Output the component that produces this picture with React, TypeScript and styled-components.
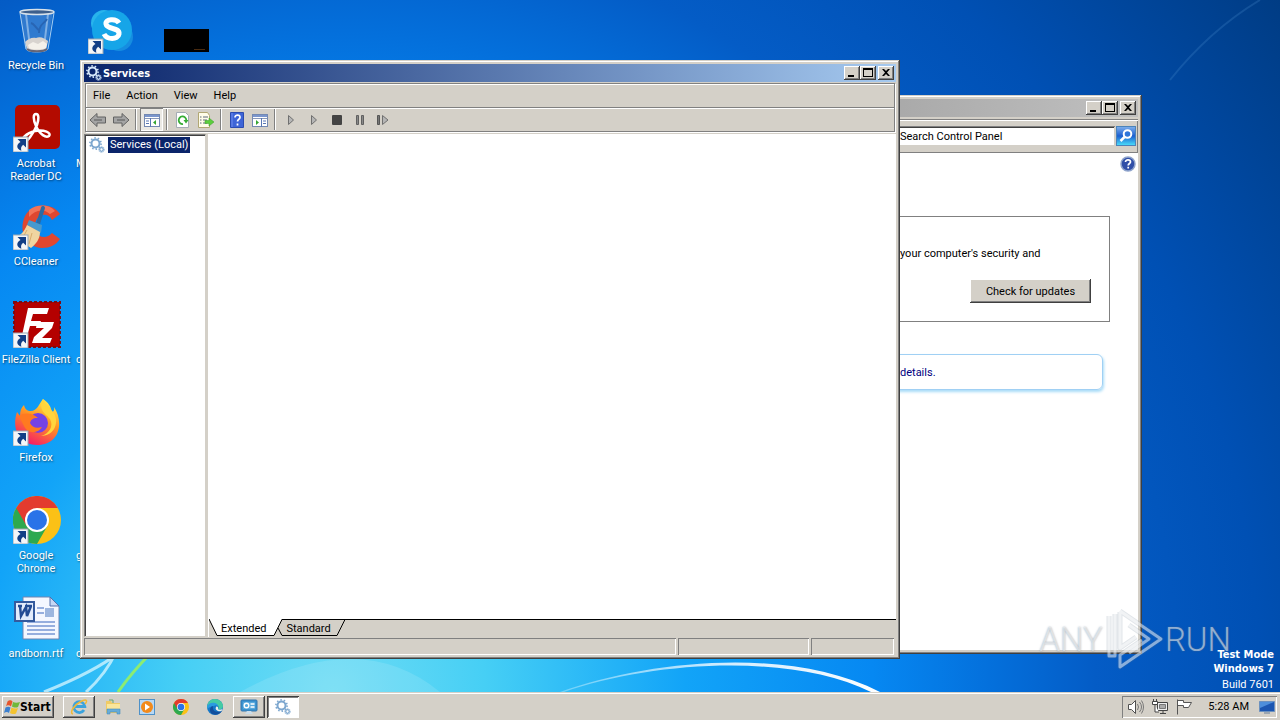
import React from 'react';
import styled, { createGlobalStyle, css } from 'styled-components';

const FACE = '#d4d0c8';
const UI_FONT = 'Roboto, "Liberation Sans", sans-serif';
const BOLD_FONT = '"DejaVu Sans Condensed", "DejaVu Sans", sans-serif';

const GlobalStyle = createGlobalStyle`
  * { box-sizing: border-box; }
  body { margin: 0; font: 11px/13px ${UI_FONT}; color: #000; }
  ul, p { margin: 0; padding: 0; list-style: none; }
  button, input { font: inherit; color: inherit; margin: 0; padding: 0; border: 0; border-radius: 0; background: none; }
  svg { display: block; flex: none; }
`;

const raised = css`
  box-shadow: inset -1px -1px #404040, inset 1px 1px #fff, inset -2px -2px #808080;
`;
const sunken = css`
  box-shadow: inset 1px 1px #808080, inset -1px -1px #fff;
`;

const Screen = styled.div`
  min-height: 100vh;
  display: flex;
  flex-direction: column;
  overflow: hidden;
`;
const Desktop = styled.main`
  position: relative;
  flex: 1;
  display: flex;
  overflow: hidden;
  background: radial-gradient(circle farthest-corner at 26% 100%, #6edcf4 0%, #46cff5 13%, #12a4f8 30%, #0688f2 46%, #0470dc 56%, #045cc6 65%, #0050b4 79%, #003c84 100%);
`;
const Wallpaper = styled.svg`
  position: absolute;
  left: 0;
  bottom: 0;
  width: 100%;
  height: 100%;
`;
const IconColumn = styled.ul`
  position: relative;
  width: 75px;
`;
const DesktopItem = styled.li`
  height: 98px;
  padding: 6px 2px 0 0;
  display: flex;
  flex-direction: column;
  align-items: center;
  gap: 5px;
  text-align: center;
  color: #fff;
  text-shadow: 1px 1px 2px rgba(0, 0, 0, 0.5);
`;
const IconSlot = styled.div`
  width: 48px;
  height: 48px;
`;
const ItemLabel = styled.span<{ $start?: boolean }>`
  max-width: 73px;
  align-self: ${(p) => (p.$start ? 'flex-start' : 'center')};
  padding: ${(p) => (p.$start ? '0 0 0 1px' : '0 1px 0 0')};
`;

const Frame = styled.section`
  position: absolute;
  display: flex;
  flex-direction: column;
  padding: 4px;
  background: ${FACE};
  box-shadow: inset -1px -1px #404040, inset 1px 1px ${FACE}, inset -2px -2px #808080, inset 2px 2px #fff;
`;
const ServicesFrame = styled(Frame)`
  left: 80px;
  right: 380px;
  top: 60px;
  bottom: 33px;
`;
const PanelFrame = styled(Frame)`
  width: 265px;
  right: 138px;
  top: 95px;
  bottom: 38px;
`;
const TitleBar = styled.header<{ $active?: boolean }>`
  height: 18px;
  flex: none;
  display: flex;
  align-items: center;
  gap: 1px;
  padding: 0 2px;
  color: #fff;
  font-family: ${BOLD_FONT};
  font-weight: bold;
  background: ${(p) => (p.$active ? 'linear-gradient(90deg, #0a246a, #a6caf0)' : 'linear-gradient(90deg, #a8a8a8, #c0c0c0)')};
`;
const TitleButtons = styled.div`
  margin-left: auto;
  display: flex;
`;
const CaptionButton = styled.button<{ $gap?: boolean }>`
  width: 16px;
  height: 14px;
  margin-left: ${(p) => (p.$gap ? '2px' : '0')};
  display: grid;
  place-items: center;
  background: ${FACE};
  ${raised}
`;
const Bars = styled.div`
  flex: none;
  margin: 1px 1px 2px;
  border: 1px solid #808080;
  box-shadow: 1px 1px #fff, inset 1px 1px #fff;
`;
const MenuBar = styled.nav`
  height: 24px;
  display: flex;
  align-items: center;
  padding-left: 7px;
  gap: 16px;
  border-bottom: 1px solid #808080;
`;
const MenuButton = styled.button`
  height: 18px;
`;
const ToolBar = styled.div`
  height: 23px;
  display: flex;
  box-shadow: inset 0 1px #fff;
`;
const ToolButton = styled.button<{ $pressed?: boolean }>`
  width: 23px;
  display: grid;
  place-items: center;
  ${(p) => p.$pressed && css`background: #ebe9e4; ${sunken}`}
`;
const Divider = styled.span`
  width: 2px;
  margin: 1px 3px;
  border-left: 1px solid #808080;
  border-right: 1px solid #fff;
`;
const Body = styled.div`
  flex: 1;
  display: flex;
  gap: 3px;
  min-height: 0;
`;
const Tree = styled.div`
  width: 122px;
  padding: 2px 0 0 4px;
  background: #fff;
  border: 1px solid #808080;
  border-right-color: #d4d0c8;
  border-bottom-color: #d4d0c8;
  box-shadow: inset 1px 1px #404040;
`;
const TreeItem = styled.button`
  display: flex;
  align-items: center;
  gap: 3px;
`;
const Selected = styled.span`
  padding: 1px 2px 2px;
  white-space: nowrap;
  color: #fff;
  background: #0a246a;
`;
const Content = styled.div`
  flex: 1;
  display: flex;
  flex-direction: column;
  box-shadow: -1px 0 #fff;
`;
const Sheet = styled.div`
  flex: 1;
  background: #fff;
`;
const TabStrip = styled.div`
  position: relative;
  height: 18px;
  display: flex;
  align-items: center;
  padding-left: 12px;
  gap: 20px;
  border-top: 1px solid #000;
`;
const TabShapes = styled.svg`
  position: absolute;
  left: 0;
  top: -1px;
`;
const Tab = styled.button`
  position: relative;
`;
const StatusBar = styled.footer`
  height: 18px;
  padding: 1px 2px 0 0;
  display: flex;
  gap: 2px;
`;
const StatusCell = styled.div<{ $width?: number }>`
  ${(p) => (p.$width ? `width: ${p.$width}px;` : 'flex: 1;')}
  ${sunken}
`;

const SearchBar = styled.div`
  height: 34px;
  flex: none;
  margin-top: 2px;
  display: flex;
  align-items: center;
  gap: 1px;
  border-top: 1px solid #808080;
  border-bottom: 1px solid #808080;
  box-shadow: inset 0 1px #fff, inset -1px 0 #808080;
`;
const SearchInput = styled.input`
  flex: 1;
  min-width: 0;
  height: 20px;
  padding-left: 19px;
  background: #fff;
  box-shadow: inset 1px 1px #808080, inset -1px -1px #d4d0c8, inset 0 2px #404040;
  &::placeholder { color: #000; opacity: 1; }
`;
const SearchButton = styled.button`
  margin-right: 2px;
`;
const PanelContent = styled.div`
  flex: 1;
  background: #fff;
  display: flex;
  flex-direction: column;
`;
const HelpButton = styled.button`
  align-self: flex-end;
  margin: 3px 2px 0 0;
`;
const UpdateBox = styled.div`
  height: 106px;
  margin: 44px 28px 0 4px;
  padding: 30px 18px 0 14px;
  border: 1px solid #808080;
  display: flex;
  flex-direction: column;
  gap: 19px;
`;
const CheckButton = styled.button`
  align-self: flex-end;
  width: 121px;
  height: 24px;
  background: ${FACE};
  ${raised}
`;
const InfoBox = styled.div`
  height: 36px;
  margin: 32px 35px 0 4px;
  padding: 0 14px;
  display: flex;
  align-items: center;
  border: 1px solid #a0d0f4;
  border-radius: 6px;
  box-shadow: 1px 2px 3px #a8dcf8;
`;
const DetailsLink = styled.a`
  color: #000080;
  text-decoration: none;
`;

const Watermark = styled.div`
  position: absolute;
  right: 49px;
  bottom: 20px;
  height: 64px;
  display: flex;
  align-items: center;
  color: rgba(255, 255, 255, 0.5);
  font: 300 33px/32px Roboto, "Liberation Sans", sans-serif;
  text-shadow: 0 0 2px rgba(90, 110, 130, 0.6);
`;
const BuildInfo = styled.div`
  position: absolute;
  right: 6px;
  bottom: 0;
  line-height: 14px;
  text-align: right;
  color: #fff;
`;
const BuildName = styled.p`
  font-family: ${BOLD_FONT};
  font-weight: bold;
`;
const BuildNumber = styled.p`
  padding-top: 2px;
`;

const TaskBar = styled.footer`
  height: 28px;
  display: flex;
  align-items: center;
  gap: 2px;
  padding: 3px 3px 2px 2px;
  background: ${FACE};
  box-shadow: inset 0 1px ${FACE}, inset 0 2px #fff;
`;
const StartButton = styled.button`
  width: 52px;
  height: 22px;
  margin-right: 7px;
  display: flex;
  align-items: center;
  padding-left: 2px;
  font: bold 12px/14px ${BOLD_FONT};
  ${raised}
`;
const TaskButton = styled.button<{ $state?: 'open' | 'current' }>`
  width: 32px;
  height: 22px;
  display: grid;
  place-items: center;
  ${(p) => p.$state === 'open' && raised}
  ${(p) => p.$state === 'current' && css`background: #fff; box-shadow: inset 1px 1px #404040, inset -1px -1px #fff, inset 2px 2px #808080;`}
`;
const Tray = styled.div`
  height: 22px;
  margin-left: auto;
  display: flex;
  align-items: center;
  gap: 8px;
  padding: 0 2px 0 6px;
  ${sunken}
`;
const Clock = styled.time`
  padding: 0 2px 0 8px;
`;

/* ---------- desktop icons ---------- */

const Shortcut = () => (
  <g>
    <rect x="0" y="33" width="15" height="15" fill="#f4f6f8" stroke="#9aa8b4" strokeWidth="1" />
    <path d="M4.500 35h8.500v8.500l-2.800-2.800c-2 1.500-2.600 3.300-1.800 6-5-1.500-5.600-6-.9-8.700z" fill="#123f86" />
  </g>
);
const Icon48 = ({ children, link }: { children: React.ReactNode; link?: boolean }) => (
  <svg width="48" height="48" viewBox="0 0 48 48" aria-hidden="true">
    {children}
    {link && <Shortcut />}
  </svg>
);

const RecycleBin = () => (
  <Icon48>
    <path d="M7 6l5 36c1 4 20 4 22 0l6-36z" fill="#4f8bd0" fillOpacity=".6" />
    <path d="M13 8l4 33M35 8l-4 33" stroke="#d0e6fa" strokeWidth="2" opacity=".5" />
    <path d="M12 36c3-3 7-5 11-4 5-2 9 1 12 3l-2 8c-4 3-15 3-19 0z" fill="#d8d3cf" />
    <path d="M15 39l5-3 5 2 5-3 4 3-1 4c-4 2-14 2-17 0z" fill="#f4f0ea" />
    <path d="M18 17c4 1 4 5 9 8M34 13c-3 5-8 5-8 14" stroke="#2865b4" strokeWidth="2" fill="none" />
    <ellipse cx="24" cy="6" rx="17" ry="2.500" fill="#3d5f8c" stroke="#d8e2ea" strokeWidth="1.500" />
    <path d="M7 7l6 36c1 4 20 4 22 0l6-36" fill="none" stroke="#a8cff2" />
    <path d="M14 43c3 3 17 3 20 0" fill="none" stroke="#667" strokeWidth="2" />
  </Icon48>
);
const Acrobat = () => (
  <Icon48 link>
    <rect x="2" y="1" width="45" height="44" rx="5" fill="#b30b00" />
    <path d="M23 10c-3 0-3 5 0 12 4 9 10 12 13 10 3-3-5-7-14-5-9 2-15 9-12 11 4 1 10-8 14-17 2-6 2-11-1-11z" fill="none" stroke="#fff" strokeWidth="2.500" />
  </Icon48>
);
const CCleaner = () => (
  <Icon48 link>
    <path d="M47 12C39 0 19 1 12 14 5 29 13 45 29 46c8 0 14-3 18-9l-8-6c-5 6-13 5-16-1-3-7 0-15 6-17 5-1 8 1 10 5z" fill="#df4730" />
    <path d="M16 8c8-6 20-6 26 1l-5 3C30 6 22 8 16 15z" fill="#f27358" />
    <path d="M30 6l-5 16" stroke="#2b6ba5" strokeWidth="4" strokeLinecap="round" />
    <path d="M16 18l13 5-1 8-14-8z" fill="#4699cf" />
    <path d="M14 23l13 7c0 7-4 12-9 16-6-4-13-7-17-10 6-2 10-6 13-13z" fill="#f0d5a0" />
    <path d="M14 28l-5 9M19 31l-3 11" stroke="#d9ad6d" />
  </Icon48>
);
const FileZilla = () => (
  <Icon48 link>
    <rect x="1" y="2" width="46" height="45" fill="#b40000" />
    <rect x="1" y="2" width="46" height="45" fill="none" stroke="#7c0a12" strokeWidth="2" strokeDasharray="3 2" />
    <path d="M15 8h21l-2 6H20l-2 7h10l-2 5H17l-4 14H8z" fill="#fff" />
    <path d="M24 22h17l-2 6-10 10h10l-2 5H19l2-6 10-9h-8z" fill="#fff" />
  </Icon48>
);
const Firefox = () => (
  <Icon48 link>
    <defs>
      <linearGradient id="fox" x1=".8" y1="0" x2=".3" y2="1">
        <stop offset="0" stopColor="#fff44f" />
        <stop offset=".45" stopColor="#ff9422" />
        <stop offset="1" stopColor="#f5156c" />
      </linearGradient>
    </defs>
    <path d="M30 1c6 4 8 8 9 13 3-1 2-4 2-5 10 15 6 38-17 38C7 47-2 32 4 14l3 4c0-5 1-8 4-11 1 4 3 6 7 6 6 0 8-7 12-12z" fill="url(#fox)" />
    <circle cx="25" cy="25" r="10" fill="#7542e5" />
    <path d="M6 18c6-5 15-2 19 2-6 0-7 2-8 5 2 4 6 6 12 4-3 6-14 8-18-1z" fill="#ff7a20" />
    <path d="M30 1c-5 11 2 14 7 20 4 7-1 15-9 17 14 0 19-15 12-24-3-4-8-7-10-13z" fill="#ffd53c" />
  </Icon48>
);
const ChromeShape = () => (
  <>
    <circle cx="24" cy="24" r="24" fill="#fbc116" />
    <path d="M24 24L3.200 12A24 24 0 0 0 24 48l10.400-18z" fill="#2da94f" />
    <path d="M24 12h20.800A24 24 0 0 0 3.200 12l10.400 18z" fill="#e33b2e" />
    <circle cx="24" cy="24" r="12" fill="#fff" />
    <circle cx="24" cy="24" r="10" fill="#2a73e8" />
  </>
);
const Chrome = () => <Icon48 link><ChromeShape /></Icon48>;
const WordDoc = () => (
  <Icon48>
    <path d="M10 3h27l9 9v33H10z" fill="#f4f7ff" stroke="#7185b2" />
    <path d="M37 3v9h9z" fill="#c6d7f4" stroke="#5371ae" />
    <path d="M24 14h7M24 19h7M14 28h28M14 32h28M14 36h28M14 40h28" stroke="#7797d4" strokeWidth="1.500" />
    <rect x="32" y="14" width="9" height="9" fill="#9db6df" />
    <rect x="2" y="8" width="19" height="19" fill="#e2ebfc" stroke="#345a9e" strokeWidth="2" />
    <path d="M5 12h4M12 12h7M7 12l1 10 5-9 1 9 4-10" fill="none" stroke="#234b94" strokeWidth="2.500" />
  </Icon48>
);
const Skype = () => (
  <Icon48>
    <circle cx="16" cy="17" r="13" fill="#28b4ec" />
    <circle cx="31" cy="31" r="14" fill="#168de0" />
    <circle cx="24" cy="24" r="20" fill="#16a5e8" />
    <path d="M31 17c-3-5-14-4-13 1 1 6 14 3 13 10-1 6-12 6-15 0" fill="none" stroke="#fff" strokeWidth="5" />
    <Shortcut />
  </Icon48>
);
const BlackTile = () => (
  <Icon48>
    <path d="M1 23h45v23H1z" fill="#000" />
    <path d="M31 43.500h11" stroke="#4a2b10" />
  </Icon48>
);

/* ---------- small icons ---------- */

const Gears = ({ color = '#7da7cf' }: { color?: string }) => (
  <svg width="16" height="16" viewBox="0 0 16 16" fill="none" stroke={color} aria-hidden="true">
    <circle cx="6.500" cy="6.500" r="4" strokeWidth="2" />
    <circle cx="6.500" cy="6.500" r="5.600" strokeWidth="1.600" strokeDasharray="1.500 2" />
    <circle cx="12.500" cy="12.500" r="1.800" strokeWidth="1.300" />
    <circle cx="12.500" cy="12.500" r="2.900" strokeWidth="1" strokeDasharray="1 1.200" />
  </svg>
);
const Arrow = ({ flip }: { flip?: boolean }) => (
  <svg width="18" height="16" viewBox="0 0 18 16" aria-hidden="true">
    <path transform={flip ? 'matrix(-1 0 0 1 18 0)' : undefined} d="M1 8L8 1.500V5h8.500v6H8v3.500z" fill="#a4a4a4" stroke="#626262" />
    <path d="M5 8h8" stroke="#7e7e7e" strokeWidth="2" />
  </svg>
);
const PaneIcon = ({ right }: { right?: boolean }) => (
  <svg width="16" height="16" viewBox="0 0 16 16" aria-hidden="true">
    <rect x=".5" y="2.500" width="15" height="12" fill="#fff" stroke="#7489b1" />
    <path d="M1 3h14v2H1z" fill="#7b96cd" />
    <path d="M1 6.500h14" stroke="#8898b8" />
    <path d={right ? 'M9.500 6v9M11 9h3M11 11.500h3' : 'M6.500 6v9M2 9h3M2 11.500h3'} stroke="#5877b4" />
    <path d={right ? 'M4 8l3 2.500L4 13z' : 'M12 8l-3 2.500 3 2.500z'} fill="#35a430" />
  </svg>
);
const RefreshIcon = () => (
  <svg width="16" height="16" viewBox="0 0 16 16" aria-hidden="true">
    <path d="M1.500.5h9l3 3v12h-12z" fill="#fff" stroke="#a5acb4" />
    <path d="M8 12A3.800 3.800 0 1 1 11.300 8" fill="none" stroke="#36ad34" strokeWidth="1.800" />
    <path d="M8.500 8h5L11 11.500z" fill="#36ad34" />
  </svg>
);
const ExportIcon = () => (
  <svg width="18" height="16" viewBox="0 0 18 16" aria-hidden="true">
    <path d="M1.500.5h9l2 3v12h-11z" fill="#fffde9" stroke="#b1a774" />
    <path d="M3 5h1.500M6 5h5M3 8h1.500M6 8h4M3 11h1.500M6 11h4" stroke="#5e687a" />
    <path d="M8 8.500h4V6l5 4-5 4v-2.500H8z" fill="#5cce3d" stroke="#379f27" strokeWidth=".5" />
  </svg>
);
const HelpBook = () => (
  <svg width="14" height="16" viewBox="0 0 14 16" aria-hidden="true">
    <path d="M.5.500h13v15H.5z" fill="#3e65d7" stroke="#2c4cb0" />
    <path d="M2 1v14" stroke="#6f8df0" />
    <path d="M5 5.500c0-3.500 5.500-3 5 0-.3 2-2.500 2-2.500 4M7.500 11.500v2" fill="none" stroke="#fff" strokeWidth="1.700" />
  </svg>
);
const PlayIcon = ({ bar }: { bar?: boolean }) => (
  <svg width="14" height="12" viewBox="0 0 14 12" aria-hidden="true">
    {bar && <path d="M1.500 1.500h2v9h-2z" fill="#777" stroke="#555" />}
    <path d={bar ? 'M6.500 1.500v9l5.500-4.500z' : 'M4.500 1.500v9l5-4.500z'} fill="#b5b5b5" stroke="#707070" />
  </svg>
);
const StopIcon = () => (
  <svg width="10" height="10" viewBox="0 0 10 10" aria-hidden="true"><rect width="10" height="10" rx="1" fill="#444" /></svg>
);
const PauseIcon = () => (
  <svg width="10" height="12" viewBox="0 0 10 12" aria-hidden="true"><path d="M1.500 1.500h2v9h-2zM6.500 1.500h2v9h-2z" fill="#888" stroke="#606060" /></svg>
);
const Magnifier = () => (
  <svg width="20" height="20" viewBox="0 0 20 20" aria-hidden="true">
    <defs>
      <linearGradient id="search" x2="0" y2="1"><stop stopColor="#7fb0ec" /><stop offset=".5" stopColor="#1c5fd0" /><stop offset="1" stopColor="#4be0fb" /></linearGradient>
    </defs>
    <rect x=".5" y=".5" width="19" height="19" fill="url(#search)" stroke="#4b83b9" />
    <circle cx="11.500" cy="8" r="3.800" fill="#2f76da" stroke="#fff" strokeWidth="2" />
    <path d="M8.500 11l-4 4" stroke="#fff" strokeWidth="2.500" />
  </svg>
);
const HelpRound = () => (
  <svg width="16" height="16" viewBox="0 0 16 16" aria-hidden="true">
    <circle cx="8" cy="8" r="7" fill="#304fa8" stroke="#8ea3cb" strokeWidth="1.500" />
    <path d="M5.500 6c0-3 5-2.600 5 0 0 1.500-2.300 1.500-2.300 3.500M8.200 10.800v1.700" fill="none" stroke="#fff" strokeWidth="1.700" />
  </svg>
);

const captionPaths = {
  min: 'M4 9h6v2H4z',
  max: 'M3 2h10v9H3zM4 4v6h8V4z',
  close: 'M4 3h2l2 2 2-2h2L9 6.500 12 10h-2L8 8l-2 2H4l3-3.500z',
};
const CaptionGlyph = ({ kind }: { kind: keyof typeof captionPaths }) => (
  <svg width="16" height="14" viewBox="0 0 16 14" aria-hidden="true">
    <path d={captionPaths[kind]} fillRule="evenodd" />
  </svg>
);
const Caption = () => (
  <TitleButtons>
    <CaptionButton aria-label="Minimize"><CaptionGlyph kind="min" /></CaptionButton>
    <CaptionButton aria-label="Maximize"><CaptionGlyph kind="max" /></CaptionButton>
    <CaptionButton aria-label="Close" $gap><CaptionGlyph kind="close" /></CaptionButton>
  </TitleButtons>
);

/* ---------- taskbar icons ---------- */

const WindowsFlag = () => (
  <svg width="16" height="16" viewBox="0 0 16 16" aria-hidden="true">
    <path d="M3.500 2.500c2-2 4-1 5 0L7 7.500C5 5.500 3 6.500 2 7.500z" fill="#e6552b" />
    <path d="M9 3c2 1 4.500 1 7 0l-2 5c-2 1-4.500.5-6-.5z" fill="#70b83b" />
    <path d="M1.500 8.500c2-1 3.500-1 5 0l-1.500 5.500c-1.500-1.500-3.500-1-5 0z" fill="#3c80cf" />
    <path d="M7.500 8.500c2 1 4 1.500 6.500.5l-2 5.500c-2 1-4.500.5-6-.5z" fill="#f4c32f" />
  </svg>
);
const ExplorerE = () => (
  <svg width="18" height="18" viewBox="0 0 18 18" aria-hidden="true">
    <path d="M14 12a5.500 5.500 0 1 1 .8-3.500H5" fill="none" stroke="#3ba3dd" strokeWidth="2.800" />
    <path d="M3 16C-1 15 4 7 10 4c7-4 8-1 5 2" fill="none" stroke="#f0b936" strokeWidth="1.500" />
  </svg>
);
const Folder = () => (
  <svg width="18" height="16" viewBox="0 0 18 16" aria-hidden="true">
    <path d="M2 2h5l1 2h8v10H2z" fill="#f0cb65" />
    <path d="M3 5h13v8H3z" fill="#fae69b" />
    <path d="M3 15v-5h13v5h-3v-2H6v2z" fill="#67acd8" stroke="#478ebd" strokeWidth=".6" />
    <path d="M5 1h4v3" fill="none" stroke="#68a86b" />
  </svg>
);
const MediaPlayer = () => (
  <svg width="16" height="16" viewBox="0 0 16 16" aria-hidden="true">
    <rect x=".5" y=".5" width="15" height="15" fill="#b8d8f4" stroke="#4e91c8" />
    <circle cx="8" cy="8" r="6" fill="#f28a1b" />
    <path d="M6 4.500l5 3.500-5 3.500z" fill="#fff" />
  </svg>
);
const MiniChrome = () => (
  <svg width="16" height="16" viewBox="0 0 48 48" aria-hidden="true"><ChromeShape /></svg>
);
const Edge = () => (
  <svg width="16" height="16" viewBox="0 0 16 16" aria-hidden="true">
    <circle cx="8" cy="8" r="8" fill="#1677c7" />
    <path d="M.3 7C1 2.500 4 0 8 0c5 0 8 4 8 7 0 3-3 4-5 3 2-3-1-5-4-5-3 0-5 1-6.700 4z" fill="#45cba4" />
    <path d="M.2 7C2 4 5 3 8 4c2 .5 3 2 3 3-1-1-3-1-4 0-2 0-5 1-6.500 3z" fill="#2a9be0" />
    <path d="M6 7c-1 5 3 7 9 5-3 5-12 5-12-1 0-2 1-3.500 3-4z" fill="#124f9d" />
    <path d="M9 8c1-1 2.500 0 2 1.500 0 1.500 2.500 1.500 4.500.5l-1 2c-3 1-7-1-5.500-4z" fill="#e8efec" />
  </svg>
);
const ControlPanelIcon = () => (
  <svg width="18" height="16" viewBox="0 0 18 16" aria-hidden="true">
    <rect x="1" y="1" width="16" height="11" rx="1" fill="#3b93d0" stroke="#3375ae" />
    <path d="M3 3h12v7H3z" fill="#5aa9dc" />
    <circle cx="6.500" cy="6.500" r="2.300" fill="none" stroke="#fff" strokeWidth="1.400" />
    <path d="M10.500 5h4M10.500 8h4" stroke="#fff" strokeWidth="1.500" />
    <path d="M7 12h4l2 3H5z" fill="#cbdce9" />
  </svg>
);
const Speaker = () => (
  <svg width="16" height="16" viewBox="0 0 16 16" fill="none" stroke="#505050" aria-hidden="true">
    <path d="M.5 5.500h3l4-4v13l-4-4h-3z" fill="#fff" />
    <path d="M9.500 5q2 3 0 6M11.500 3q4 5 0 10M13.500 1.500q4 6.500 0 13" stroke="#777" />
  </svg>
);
const Network = () => (
  <svg width="16" height="16" viewBox="0 0 16 16" fill="none" stroke="#444" aria-hidden="true">
    <path d="M5.500 3.500h10v8h-10zM8 14.500h6M11 12v2" fill="#eee" />
    <path d="M7.500 5.500h6v4h-6z" fill="#aaa" stroke="#777" />
    <path d="M1.500 0v3M4.500 0v3M.5 2.500h5v3h-5zM3 6v7h4" fill="#fff" />
  </svg>
);
const Flag = () => (
  <svg width="16" height="16" viewBox="0 0 16 16" fill="#fff" stroke="#555" aria-hidden="true">
    <path d="M1.500.5v15M1.500 1.500h6v2h8l-3 5h-5v-2h-6z" />
  </svg>
);
const Monitor = () => (
  <svg width="16" height="16" viewBox="0 0 16 16" aria-hidden="true">
    <path d="M.5 2.500h15v10H.5z" fill="#1c56b1" stroke="#6c91bf" />
    <path d="M1 3h14L1 9z" fill="#4d8edb" />
    <path d="M5 14h6" stroke="#657d9a" />
  </svg>
);

const PlayLogo = () => (
  <svg width="62" height="64" viewBox="0 0 62 64" fill="none" strokeLinejoin="round" aria-hidden="true">
    <g stroke="#5f7488" strokeOpacity=".18" strokeWidth="5">
      <path d="M17 3l41 28-41 28V47l22-15M17 4v36l16-11M6 8v40h6V6M26 17l20 14-20 14" />
    </g>
    <g stroke="#fff" strokeOpacity=".5" strokeWidth="3">
      <path d="M17 3l41 28-41 28V47l22-15M17 4v36l16-11M6 8v40h6V6M26 17l20 14-20 14" />
    </g>
  </svg>
);

type Item = { icon?: React.ReactNode; label?: string; start?: boolean };
const columns: Item[][] = [
  [
    { icon: <RecycleBin />, label: 'Recycle Bin' },
    { icon: <Acrobat />, label: 'Acrobat Reader DC' },
    { icon: <CCleaner />, label: 'CCleaner' },
    { icon: <FileZilla />, label: 'FileZilla Client' },
    { icon: <Firefox />, label: 'Firefox' },
    { icon: <Chrome />, label: 'Google Chrome' },
    { icon: <WordDoc />, label: 'andborn.rtf' },
  ],
  [
    { icon: <Skype /> },
    { label: 'M', start: true },
    {},
    { label: 'c', start: true },
    {},
    { label: 'g', start: true },
    { label: 'c', start: true },
  ],
  [{ icon: <BlackTile /> }],
];

type Tool = { name: string; icon: React.ReactNode; pressed?: boolean };
const toolGroups: Tool[][] = [
  [{ name: 'Back', icon: <Arrow /> }, { name: 'Forward', icon: <Arrow flip /> }],
  [{ name: 'Show/Hide Console Tree', icon: <PaneIcon />, pressed: true }],
  [{ name: 'Refresh', icon: <RefreshIcon /> }, { name: 'Export List', icon: <ExportIcon /> }],
  [{ name: 'Help', icon: <HelpBook /> }, { name: 'Show/Hide Action Pane', icon: <PaneIcon right /> }],
  [
    { name: 'Start', icon: <PlayIcon /> },
    { name: 'Resume', icon: <PlayIcon /> },
    { name: 'Stop', icon: <StopIcon /> },
    { name: 'Pause', icon: <PauseIcon /> },
    { name: 'Restart', icon: <PlayIcon bar /> },
  ],
];

const tasks: { name: string; icon: React.ReactNode; state?: 'open' | 'current' }[] = [
  { name: 'Internet Explorer', icon: <ExplorerE />, state: 'open' },
  { name: 'File Explorer', icon: <Folder /> },
  { name: 'Media Player', icon: <MediaPlayer /> },
  { name: 'Chrome', icon: <MiniChrome /> },
  { name: 'Edge', icon: <Edge /> },
  { name: 'Control Panel', icon: <ControlPanelIcon />, state: 'open' },
  { name: 'Services', icon: <Gears />, state: 'current' },
];

const ControlPanelWindow = () => (
  <PanelFrame aria-label="Control Panel">
    <TitleBar><Caption /></TitleBar>
    <SearchBar>
      <SearchInput type="text" placeholder="Search Control Panel" aria-label="Search Control Panel" />
      <SearchButton aria-label="Search"><Magnifier /></SearchButton>
    </SearchBar>
    <PanelContent>
      <HelpButton aria-label="Help"><HelpRound /></HelpButton>
      <UpdateBox>
        <p>your computer's security and</p>
        <CheckButton>Check for updates</CheckButton>
      </UpdateBox>
      <InfoBox><DetailsLink href="#details">details.</DetailsLink></InfoBox>
    </PanelContent>
  </PanelFrame>
);

const ServicesWindow = () => (
  <ServicesFrame aria-label="Services">
    <TitleBar $active>
      <Gears color="#d5e7fa" />
      <span>Services</span>
      <Caption />
    </TitleBar>
    <Bars>
      <MenuBar>
        {['File', 'Action', 'View', 'Help'].map((m) => <MenuButton key={m}>{m}</MenuButton>)}
      </MenuBar>
      <ToolBar>
        {toolGroups.map((group, i) => (
          <React.Fragment key={i}>
            {i > 0 && <Divider />}
            {group.map((t) => (
              <ToolButton key={t.name} aria-label={t.name} $pressed={t.pressed}>{t.icon}</ToolButton>
            ))}
          </React.Fragment>
        ))}
      </ToolBar>
    </Bars>
    <Body>
      <Tree>
        <TreeItem><Gears /><Selected>Services (Local)</Selected></TreeItem>
      </Tree>
      <Content>
        <Sheet />
        <TabStrip>
          <TabShapes width="140" height="18" viewBox="0 0 140 18" aria-hidden="true">
            <path d="M0 0h73l-8 16H8z" fill="#fff" />
            <path d="M0 0l8 16.500h57L73 .5M69 9l4 7.500h55L136 .5" fill="none" stroke="#000" />
          </TabShapes>
          <Tab>Extended</Tab>
          <Tab>Standard</Tab>
        </TabStrip>
      </Content>
    </Body>
    <StatusBar>
      <StatusCell />
      <StatusCell $width={131} />
      <StatusCell $width={83} />
    </StatusBar>
  </ServicesFrame>
);

export default function App() {
  return (
    <Screen>
      <GlobalStyle />
      <Desktop>
        <Wallpaper viewBox="0 0 1280 692" preserveAspectRatio="none" aria-hidden="true">
          <defs>
            <linearGradient id="arc"><stop stopColor="#fff" stopOpacity=".3" /><stop offset=".5" stopColor="#fff" stopOpacity=".8" /><stop offset="1" stopColor="#fff" /></linearGradient>
          </defs>
          <path d="M240 692q120-66 200 0z" fill="#fff" fillOpacity=".12" />
          <path d="M44 692q50-20 76-40M86 692q20-18 30-40" fill="none" stroke="#d9f7ff" strokeOpacity=".75" strokeWidth="3" />
          <path d="M118 692q14-20 34-40" fill="none" stroke="#8cec72" strokeWidth="3" />
          <path d="M560 692C650 660 790 646 880 692h-9C790 652 650 662 564 692z" fill="url(#arc)" />
          <path d="M1170 80Q1210 30 1260 0" fill="none" stroke="#4b91cf" strokeOpacity=".25" strokeWidth="2" />
        </Wallpaper>
        {columns.map((col, c) => (
          <IconColumn key={c}>
            {col.map((item, r) => (
              <DesktopItem key={r}>
                <IconSlot>{item.icon}</IconSlot>
                {item.label && <ItemLabel $start={item.start}>{item.label}</ItemLabel>}
              </DesktopItem>
            ))}
          </IconColumn>
        ))}
        <ControlPanelWindow />
        <ServicesWindow />
        <Watermark><span>ANY</span><PlayLogo /><span>RUN</span></Watermark>
        <BuildInfo>
          <BuildName>Test Mode</BuildName>
          <BuildName>Windows 7</BuildName>
          <BuildNumber>Build 7601</BuildNumber>
        </BuildInfo>
      </Desktop>
      <TaskBar>
        <StartButton><WindowsFlag />Start</StartButton>
        {tasks.map((t) => (
          <TaskButton key={t.name} aria-label={t.name} $state={t.state}>{t.icon}</TaskButton>
        ))}
        <Tray>
          <Speaker />
          <Network />
          <Flag />
          <Clock>5:28 AM</Clock>
          <Monitor />
        </Tray>
      </TaskBar>
    </Screen>
  );
}
